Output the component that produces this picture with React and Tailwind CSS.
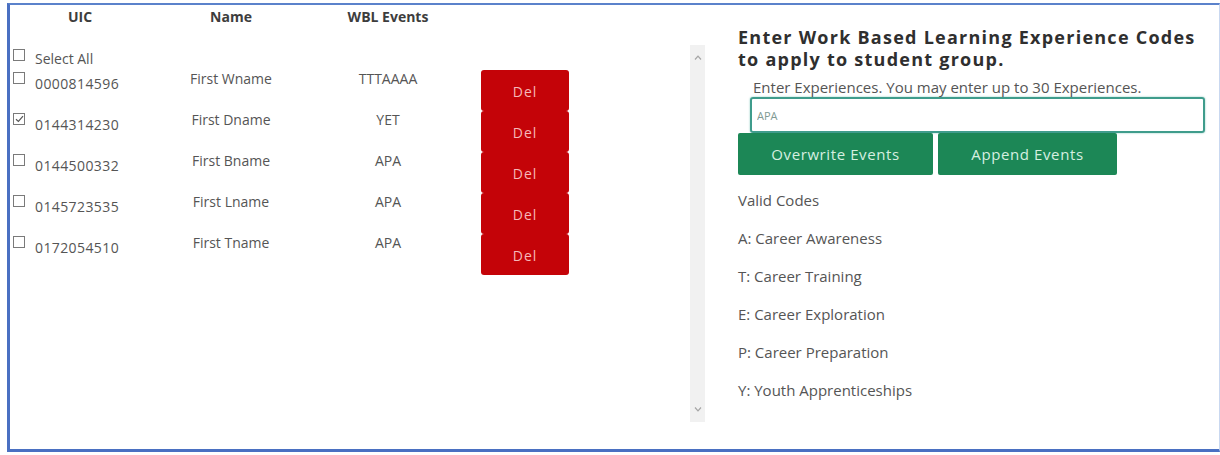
import { useState } from 'react'

const students = [
  { uic: '0000814596', name: 'First Wname', events: 'TTTAAAA', checked: false },
  { uic: '0144314230', name: 'First Dname', events: 'YET', checked: true },
  { uic: '0144500332', name: 'First Bname', events: 'APA', checked: false },
  { uic: '0145723535', name: 'First Lname', events: 'APA', checked: false },
  { uic: '0172054510', name: 'First Tname', events: 'APA', checked: false },
]

const validCodes = [
  'A: Career Awareness',
  'T: Career Training',
  'E: Career Exploration',
  'P: Career Preparation',
  'Y: Youth Apprenticeships',
]

const font = "font-['Open_Sans',sans-serif]"

// plain square checkbox, drawn so it looks the same everywhere
const Box = ({ checked, onClick, className = '' }) => (
  <span
    onClick={onClick}
    className={`w-[12px] h-[12px] shrink-0 border border-[#7a7a7a] bg-white flex items-center justify-center cursor-pointer ${className}`}
  >
    {checked && (
      <svg width="9" height="8" viewBox="0 0 9 8" fill="none">
        <path d="M1 4.2 L3.4 6.4 L8 1.2" stroke="#555" strokeWidth="1.2" />
      </svg>
    )}
  </span>
)

const Chevron = ({ up }) => (
  <svg width="8" height="5" viewBox="0 0 8 5" fill="none">
    <path d={up ? 'M1 4.5 L4 1.2 L7 4.5' : 'M1 0.5 L4 3.8 L7 0.5'} stroke="#a5a5a5" strokeWidth="1.2" />
  </svg>
)

export default function App() {
  const [rows, setRows] = useState(students)
  const [codes, setCodes] = useState('APA')
  const allChecked = rows.every(r => r.checked)

  const toggle = (i) => setRows(prev => prev.map((r, j) => (j === i ? { ...r, checked: !r.checked } : r)))
  const toggleAll = () => setRows(prev => prev.map(r => ({ ...r, checked: !allChecked })))

  return (
    <div className={`h-[455px] bg-white pt-[3px] pl-[7px] ${font}`}>
      <div className="h-[449px] flex border-l-[3px] border-t-2 border-b-[3px] border-r border-l-[#4a70c2] border-t-[#5b82cb] border-b-[#4a70c2] border-r-[#c9d8f0]">

        {/* student table */}
        <div className="w-[695px] flex flex-col">
          <div className="h-[40px] pt-[3px] grid grid-cols-[140px_162px_152px] text-[14px] leading-[18px] font-bold text-[#3d3d3d]">
            <div className="text-center">UIC</div>
            <div className="text-center">Name</div>
            <div className="text-center">WBL Events</div>
          </div>

          <div className="h-[377px] flex">
            <div className="flex-1 text-[14px] leading-[18px] text-[#555]">
              <div className="h-[25px] flex items-start pl-[3px]">
                <Box checked={allChecked} onClick={toggleAll} className="mt-[4px]" />
                <span className="ml-[10px] mt-[5px]">Select All</span>
              </div>

              {rows.map((r, i) => (
                <div key={r.uic} className="h-[41px] grid grid-cols-[140px_162px_152px_17px_88px] items-start">
                  <div className="flex items-start pl-[3px]">
                    <Box checked={r.checked} onClick={() => toggle(i)} className="mt-[2px]" />
                    <span className="ml-[10px] mt-[5px] tracking-[0.4px]">{r.uic}</span>
                  </div>
                  <div className="text-center">{r.name}</div>
                  <div className="text-center">{r.events}</div>
                  <div />
                  <button
                    onClick={() => setRows(prev => prev.filter((_, j) => j !== i))}
                    className="h-[41px] rounded-[3px] bg-[#c40308] text-[#f6b9b9] text-[14px] tracking-[1px] pt-[2px]"
                  >
                    Del
                  </button>
                </div>
              ))}
            </div>

            {/* scroll track */}
            <div className="w-[15px] h-[377px] bg-[#f1f1f1] flex flex-col items-center justify-between py-[10px]">
              <Chevron up />
              <Chevron />
            </div>
          </div>
        </div>

        {/* code entry */}
        <div className="flex-1 pl-[33px] pt-[21px]">
          <h2 className="text-[18px] leading-[22px] font-bold tracking-[1.25px] text-[#2f2f2f]">
            Enter Work Based Learning Experience Codes<br />to apply to student group.
          </h2>
          <p className="mt-[7px] ml-[15px] text-[15px] leading-[20px] text-[#555]">
            Enter Experiences. You may enter up to 30 Experiences.
          </p>
          <input
            value={codes}
            onChange={e => setCodes(e.target.value)}
            className="block ml-[12px] w-[455px] h-[36px] border-2 border-[#3f9c8c] rounded-[3px] px-[5px] text-[11px] text-[#7f9a94] outline-none shadow-[0_0_2px_#7fc4b8]"
          />
          <div className="flex gap-[5px]">
            <button className="w-[195px] h-[42px] rounded-[2px] bg-[#1c8756] text-[#d6efe0] text-[15px] tracking-[0.6px]">
              Overwrite Events
            </button>
            <button className="w-[179px] h-[42px] rounded-[2px] bg-[#1c8756] text-[#d6efe0] text-[15px] tracking-[0.6px]">
              Append Events
            </button>
          </div>

          <div className="mt-[15px] text-[15px] leading-[20px] text-[#555]">
            <p className="mb-[18px]">Valid Codes</p>
            {validCodes.map(c => (
              <p key={c} className="mb-[18px]">{c}</p>
            ))}
          </div>
        </div>
      </div>
    </div>
  )
}
